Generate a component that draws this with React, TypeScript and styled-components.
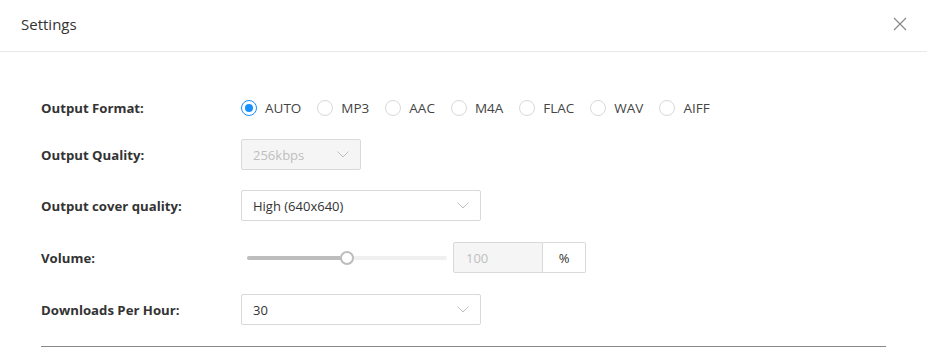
import React from "react";
import styled, { createGlobalStyle } from "styled-components";

const Global = createGlobalStyle`
  html, body { margin: 0; padding: 0; background: #fff; }
  body { font-family: "Open Sans", "Noto Sans", Arial, sans-serif; color: #333; }
  * { box-sizing: border-box; }
`;

const Dialog = styled.div`
  width: 927px;
  height: 349px;
  background: #fff;
  overflow: hidden;
`;

const Header = styled.div`
  height: 52px;
  border-bottom: 1px solid #e8e8e8;
  display: flex;
  align-items: center;
  justify-content: space-between;
  padding: 0 20px 3px 21px;
`;

const Title = styled.div`
  font-size: 15px;
  color: #333;
`;

const Close = styled.button`
  border: none;
  background: none;
  padding: 0;
  width: 14px;
  height: 14px;
  display: flex;
  cursor: pointer;
`;

const Body = styled.div`
  padding: 40px 41px 0 41px;
`;

const Row = styled.div<{ $gap: number }>`
  display: flex;
  align-items: center;
  height: 31px;
  margin-top: ${(p) => p.$gap}px;
`;

const Label = styled.div`
  width: 200px;
  font-size: 13.2px;
  font-weight: 700;
  color: #333;
`;

const RadioGroup = styled.div`
  display: flex;
  align-items: center;
  gap: 16px;
`;

const RadioItem = styled.label`
  display: flex;
  align-items: center;
  gap: 8px;
  font-size: 13.5px;
  color: #444;
`;

const RadioCircle = styled.span<{ $checked: boolean }>`
  width: 16px;
  height: 16px;
  border-radius: 50%;
  border: 1px solid ${(p) => (p.$checked ? "#1890ff" : "#d9d9d9")};
  display: flex;
  align-items: center;
  justify-content: center;
  &::after {
    content: "";
    width: 8px;
    height: 8px;
    border-radius: 50%;
    background: ${(p) => (p.$checked ? "#1890ff" : "transparent")};
  }
`;

const Select = styled.div<{ $width: number; $disabled?: boolean }>`
  width: ${(p) => p.$width}px;
  height: 31px;
  border: 1px solid #d9d9d9;
  border-radius: 2px;
  background: ${(p) => (p.$disabled ? "#f5f5f5" : "#fff")};
  color: ${(p) => (p.$disabled ? "#bfbfbf" : "#333")};
  font-size: 13px;
  display: flex;
  align-items: center;
  justify-content: space-between;
  padding: 0 11px 0 11px;
`;

const SliderWrap = styled.div`
  width: 212px;
  padding-left: 6px;
  display: flex;
  align-items: center;
`;

const Track = styled.div`
  position: relative;
  width: 200px;
  height: 4px;
  border-radius: 2px;
  background: #f0f0f0;
`;

const Fill = styled.div`
  height: 4px;
  border-radius: 2px;
  background: #bdbdbd;
`;

const Thumb = styled.div`
  position: absolute;
  top: 50%;
  width: 14px;
  height: 14px;
  margin-left: -7px;
  margin-top: -7px;
  border-radius: 50%;
  background: #fff;
  border: 2px solid #bdbdbd;
`;

const NumberBox = styled.div`
  width: 90px;
  height: 31px;
  border: 1px solid #d9d9d9;
  border-radius: 2px 0 0 2px;
  background: #f5f5f5;
  color: #bfbfbf;
  font-size: 13px;
  display: flex;
  align-items: center;
  padding-left: 12px;
`;

const Addon = styled.div`
  width: 43px;
  height: 31px;
  border: 1px solid #d9d9d9;
  border-left: none;
  border-radius: 0 2px 2px 0;
  display: flex;
  align-items: center;
  justify-content: center;
  font-size: 13px;
  color: #333;
`;

const Divider = styled.div`
  margin-top: 21px;
  height: 1px;
  background: #888;
`;

const Chevron = () => (
  <svg width="12" height="7" viewBox="0 0 12 7" fill="none">
    <path d="M0.5 0.5 L6 6 L11.5 0.5" stroke="#bfbfbf" strokeWidth="1" />
  </svg>
);

const formats = ["AUTO", "MP3", "AAC", "M4A", "FLAC", "WAV", "AIFF"];

export default function App() {
  const volume = 50;
  return (
    <Dialog>
      <Global />
      <Header>
        <Title>Settings</Title>
        <Close aria-label="close">
          <svg width="14" height="14" viewBox="0 0 14 14">
            <path d="M1 1 L13 13 M13 1 L1 13" stroke="#888" strokeWidth="1.2" />
          </svg>
        </Close>
      </Header>
      <Body>
        <Row $gap={0}>
          <Label>Output Format:</Label>
          <RadioGroup>
            {formats.map((f, i) => (
              <RadioItem key={f}>
                <RadioCircle $checked={i === 0} />
                {f}
              </RadioItem>
            ))}
          </RadioGroup>
        </Row>
        <Row $gap={16}>
          <Label>Output Quality:</Label>
          <Select $width={120} $disabled>
            256kbps
            <Chevron />
          </Select>
        </Row>
        <Row $gap={20}>
          <Label>Output cover quality:</Label>
          <Select $width={240}>
            High (640x640)
            <Chevron />
          </Select>
        </Row>
        <Row $gap={21}>
          <Label>Volume:</Label>
          <SliderWrap>
            <Track>
              <Fill style={{ width: `${volume}%` }} />
              <Thumb style={{ left: `${volume}%` }} />
            </Track>
          </SliderWrap>
          <NumberBox>100</NumberBox>
          <Addon>%</Addon>
        </Row>
        <Row $gap={21}>
          <Label>Downloads Per Hour:</Label>
          <Select $width={240}>
            30
            <Chevron />
          </Select>
        </Row>
        <Divider />
      </Body>
    </Dialog>
  );
}
